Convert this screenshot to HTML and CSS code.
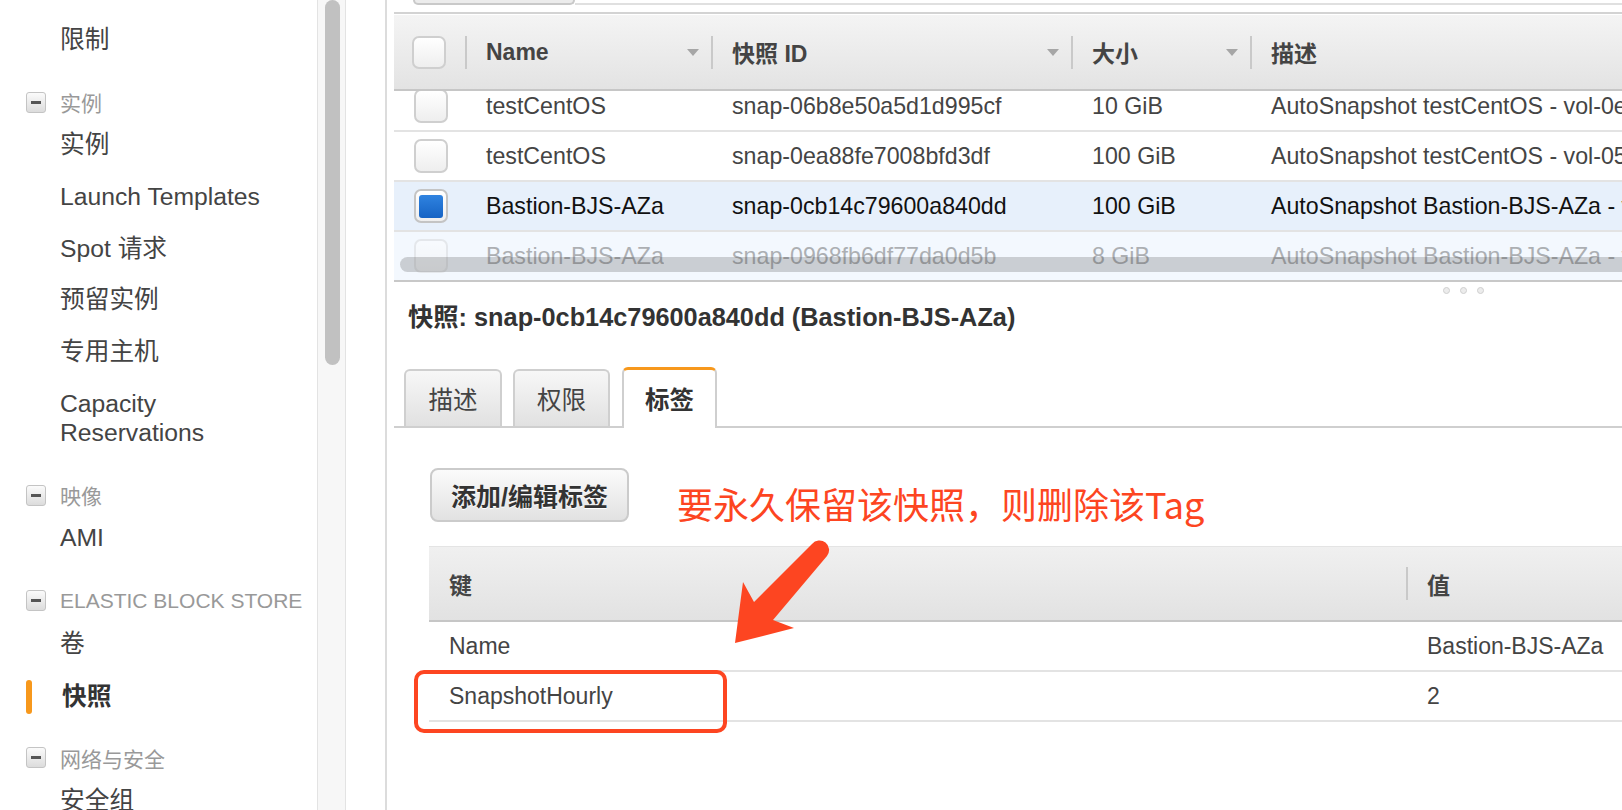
FILE: index.html
```html
<!DOCTYPE html>
<html lang="zh-CN">
<head>
<meta charset="utf-8">
<title>快照</title>
<link rel="stylesheet" href="styles.css">
</head>
<body>
<div class="app">
  <aside class="sidebar">
    <div class="nav-item">限制</div>
    <div class="nav-head"><span class="minus"></span>实例</div>
    <div class="nav-item">实例</div>
    <div class="nav-item">Launch Templates</div>
    <div class="nav-item">Spot 请求</div>
    <div class="nav-item">预留实例</div>
    <div class="nav-item">专用主机</div>
    <div class="nav-item">Capacity<br>Reservations</div>
    <div class="nav-head"><span class="minus"></span>映像</div>
    <div class="nav-item">AMI</div>
    <div class="nav-head"><span class="minus"></span>ELASTIC BLOCK STORE</div>
    <div class="nav-item">卷</div>
    <div class="nav-item active"><span class="mark"></span>快照</div>
    <div class="nav-head"><span class="minus"></span>网络与安全</div>
    <div class="nav-item">安全组</div>
  </aside>
  <div class="vscroll"><div class="thumb"></div></div>
  <div class="gutter"></div>
  <main class="content">
    <div class="toolbar"><div class="tbtn"></div><div class="tinput"></div></div>

    <div class="grid">
      <div class="ghead">
        <div class="hc first"><span class="cb"></span></div>
        <div class="hc div">Name<span class="tri"></span></div>
        <div class="hc div">快照 ID<span class="tri"></span></div>
        <div class="hc div">大小<span class="tri"></span></div>
        <div class="hc div">描述</div>
      </div>
      <div class="gbody">
        <div class="rows">
          <div class="row">
            <div class="c first"><span class="cb"></span></div>
            <div class="c">testCentOS</div>
            <div class="c">snap-06b8e50a5d1d995cf</div>
            <div class="c">10 GiB</div>
            <div class="c">AutoSnapshot testCentOS - vol-0e4c7d21a9b3</div>
          </div>
          <div class="row">
            <div class="c first"><span class="cb"></span></div>
            <div class="c">testCentOS</div>
            <div class="c">snap-0ea88fe7008bfd3df</div>
            <div class="c">100 GiB</div>
            <div class="c">AutoSnapshot testCentOS - vol-05b2e9f1c7d4</div>
          </div>
          <div class="row sel">
            <div class="c first"><span class="cb on"></span></div>
            <div class="c">Bastion-BJS-AZa</div>
            <div class="c">snap-0cb14c79600a840dd</div>
            <div class="c">100 GiB</div>
            <div class="c">AutoSnapshot Bastion-BJS-AZa - vol-0a1</div>
          </div>
          <div class="row fade">
            <div class="c first"><span class="cb"></span></div>
            <div class="c">Bastion-BJS-AZa</div>
            <div class="c">snap-0968fb6df77da0d5b</div>
            <div class="c">8 GiB</div>
            <div class="c">AutoSnapshot Bastion-BJS-AZa - vol-0c2</div>
          </div>
        </div>
        <div class="hscroll"></div>
      </div>
    </div>

    <div class="resize"><span></span><span></span><span></span></div>

    <h2 class="title">快照: snap-0cb14c79600a840dd (Bastion-BJS-AZa)</h2>

    <div class="tabs">
      <div class="tab t1">描述</div>
      <div class="tab t2">权限</div>
      <div class="tab active">标签</div>
    </div>

    <div class="actions">
      <button class="btn">添加/编辑标签</button>
      <span class="note">要永久保留该快照，则删除该Tag</span>
    </div>

    <div class="tagtable">
      <div class="thead">
        <div class="tc">键</div>
        <div class="tc div">值</div>
      </div>
      <div class="trow">
        <div class="tc">Name</div>
        <div class="tc v">Bastion-BJS-AZa</div>
      </div>
      <div class="trow">
        <div class="tc">SnapshotHourly</div>
        <div class="tc v">2</div>
      </div>
    </div>

    <div class="hl-box"></div>
    <svg class="arrow" width="110" height="110" viewBox="0 0 110 110" xmlns="http://www.w3.org/2000/svg">
      <path d="M82 4 L24 62 L13 42 L5 103 L64 88 L43 80 L97 16 A9.5 9.5 0 0 0 82 4 Z" fill="#fd4521"/>
    </svg>
  </main>
</div>
</body>
</html>
```
FILE: styles.css
```css
html, body {
  margin: 0;
  height: 810px;
  overflow: hidden;
  background: #fff;
}
body {
  font-family: "Liberation Sans", "Noto Sans CJK SC", sans-serif;
  color: #444;
}
.app {
  display: flex;
  height: 810px;
}

/* ---------- sidebar ---------- */
.sidebar {
  width: 317px;
  flex: none;
  padding-top: 13.45px;
  box-sizing: border-box;
  overflow: hidden;
}
.nav-item {
  padding: 11.35px 0 11.35px 60px;
  line-height: 29px;
  font-size: 24.7px;
  color: #444;
  white-space: nowrap;
}
.nav-item.active {
  display: flex;
  align-items: center;
  height: 29px;
  padding: 13.5px 0 9.2px 26px;
  font-weight: bold;
  color: #333;
}
.mark {
  width: 6px;
  height: 34px;
  border-radius: 3px;
  background: #f7981c;
  margin-right: 30px;
  flex: none;
}
.nav-head {
  display: flex;
  align-items: center;
  height: 33.1px;
  margin-top: 20.7px;
  padding-left: 26px;
  font-size: 21px;
  color: #999;
  white-space: nowrap;
}
.minus {
  width: 20px;
  height: 21px;
  box-sizing: border-box;
  border: 1px solid #c4c4c4;
  border-radius: 3px;
  background: linear-gradient(#fbfbfb, #dcdcdc);
  margin-right: 14px;
  display: flex;
  align-items: center;
  justify-content: center;
  flex: none;
}
.minus::after {
  content: "";
  width: 10px;
  height: 3px;
  background: #555;
}

/* ---------- sidebar scroll track ---------- */
.vscroll {
  width: 29px;
  flex: none;
  box-sizing: border-box;
  background: #f7f7f7;
  border-left: 1px solid #e3e3e3;
  border-right: 1px solid #e3e3e3;
}
.thumb {
  margin-left: 7px;
  width: 15px;
  height: 365px;
  border-radius: 8px;
  background: #c1c1c1;
}
.gutter {
  width: 39px;
  flex: none;
}

/* ---------- content ---------- */
.content {
  flex: 1;
  min-width: 0;
  position: relative;
  border-left: 2px solid #dcdcdc;
  overflow: hidden;
}
.toolbar {
  height: 5px;
  display: flex;
  margin-left: 26px;
}
.tbtn {
  width: 162px;
  height: 5px;
  box-sizing: border-box;
  border: 2px solid #c9c9c9;
  border-top: none;
  border-radius: 0 0 6px 6px;
  background: #ececec;
}
.tinput {
  flex: 1;
  height: 5px;
  box-sizing: border-box;
  border-bottom: 2px solid #e0e0e0;
}

/* grid */
.grid {
  margin: 7px 0 0 7px;
  border-top: 2px solid #d3d3d3;
  border-bottom: 2px solid #c8c8c8;
}
.ghead,
.row {
  display: grid;
  grid-template-columns: 71px 246px 360px 179px 1fr;
}
.ghead {
  height: 74px;
  border-top: 1px solid #fff;
  border-bottom: 2px solid #c6c6c6;
  background: linear-gradient(#f4f4f4, #e3e3e3);
}
.hc {
  display: flex;
  align-items: center;
  padding-left: 21px;
  font-size: 23px;
  font-weight: bold;
  color: #444;
  white-space: nowrap;
  overflow: hidden;
}
.hc.first {
  padding-left: 18px;
}
.div {
  background: linear-gradient(#c9c9c9, #c9c9c9) no-repeat 0 center / 2px 33px;
}
.tri {
  margin-left: auto;
  margin-right: 12px;
  width: 0;
  height: 0;
  border-left: 6.5px solid transparent;
  border-right: 6.5px solid transparent;
  border-top: 7px solid #a6a6a6;
}
.gbody {
  height: 189px;
  overflow: hidden;
  position: relative;
}
.rows {
  margin-top: -9px;
}
.row {
  height: 48px;
  border-bottom: 2px solid #e3e3e3;
}
.c {
  display: flex;
  align-items: center;
  padding-left: 21px;
  font-size: 23.2px;
  color: #444;
  white-space: nowrap;
  overflow: hidden;
}
.c.first {
  padding-left: 20px;
}
.row.sel {
  background: #e7f0fb;
}
.row.sel .c {
  color: #111;
}
.row.fade {
  background: #f3f8fe;
}
.row.fade .c {
  opacity: 0.4;
}
.cb {
  width: 34px;
  height: 33px;
  box-sizing: border-box;
  border: 2px solid #cfcfcf;
  border-radius: 7px;
  background: linear-gradient(#ffffff, #eeeeee);
  display: flex;
  align-items: center;
  justify-content: center;
  flex: none;
}
.c .cb {
  height: 34px;
}
.cb.on {
  border-color: #c4c4c4;
}
.cb.on::after {
  content: "";
  width: 24px;
  height: 23px;
  border-radius: 3px;
  background: linear-gradient(#2f83e0, #1663c4);
}
.hscroll {
  position: absolute;
  left: 6px;
  right: -20px;
  top: 166px;
  height: 15px;
  border-radius: 8px;
  background: rgba(60, 60, 60, 0.22);
}

/* resize dots */
.resize {
  height: 20px;
  box-sizing: border-box;
  padding: 5px 0 0 1056px;
  display: flex;
  gap: 10px;
}
.resize span {
  width: 7px;
  height: 7px;
  box-sizing: border-box;
  border-radius: 50%;
  border: 1px solid #cfcfcf;
  background: #ececec;
}

/* title */
.title {
  margin: 0;
  padding-left: 21px;
  font-size: 25.3px;
  line-height: 30px;
  height: 30px;
  font-weight: bold;
  color: #333;
  white-space: nowrap;
}

/* tabs */
.tabs {
  display: flex;
  align-items: flex-end;
  height: 59px;
  margin: 35px 0 0 7px;
  padding-left: 10px;
  border-bottom: 2px solid #cfcfcf;
}
.tab {
  height: 57px;
  box-sizing: border-box;
  border: 2px solid #cfcfcf;
  border-bottom: none;
  border-radius: 6px 6px 0 0;
  background: linear-gradient(#f7f7f7, #e1e1e1);
  font-size: 24.5px;
  color: #444;
  display: flex;
  align-items: center;
  justify-content: center;
}
.tab.t1 {
  width: 98px;
  margin-right: 11px;
}
.tab.t2 {
  width: 97px;
  margin-right: 12px;
}
.tab.active {
  width: 95px;
  height: 61px;
  margin-bottom: -2px;
  border-top: 3px solid #f7981c;
  background: #fff;
  color: #333;
  font-weight: bold;
  padding-bottom: 2px;
}

/* actions */
.actions {
  display: flex;
  align-items: flex-start;
  margin: 40px 0 0 43px;
}
.btn {
  width: 199px;
  height: 54px;
  box-sizing: border-box;
  border: 2px solid #cbcbcb;
  border-radius: 8px;
  background: linear-gradient(#fbfbfb, #e2e2e2);
  font-family: "Liberation Sans", "Noto Sans CJK SC", sans-serif;
  font-size: 25px;
  font-weight: bold;
  color: #333;
  text-shadow: 0 1px 0 #fff;
  padding: 0;
}
.note {
  margin: 15px 0 0 48px;
  font-family: "Noto Sans CJK SC", sans-serif;
  font-size: 36px;
  line-height: 40px;
  color: #fd4521;
  white-space: nowrap;
}

/* tag table */
.tagtable {
  margin: 23px 0 0 42px;
}
.thead,
.trow {
  display: grid;
  grid-template-columns: 977px 1fr;
}
.thead {
  height: 73px;
  border-top: 1px solid #e4e4e4;
  border-bottom: 2px solid #c6c6c6;
  background: linear-gradient(#f0f0f0, #e2e2e2);
}
.thead .tc {
  font-weight: bold;
  font-size: 23px;
}
.trow {
  height: 48px;
  border-bottom: 2px solid #e3e3e3;
}
.tc {
  display: flex;
  align-items: center;
  padding-left: 20px;
  font-size: 23px;
  color: #444;
  white-space: nowrap;
}
.tc.div,
.tc.v {
  padding-left: 21px;
}

/* annotation overlays */
.hl-box {
  position: absolute;
  left: 27px;
  top: 670px;
  width: 313px;
  height: 63px;
  box-sizing: border-box;
  border: 4px solid #fd4521;
  border-radius: 10px;
}
.arrow {
  position: absolute;
  left: 343px;
  top: 540px;
}
```
